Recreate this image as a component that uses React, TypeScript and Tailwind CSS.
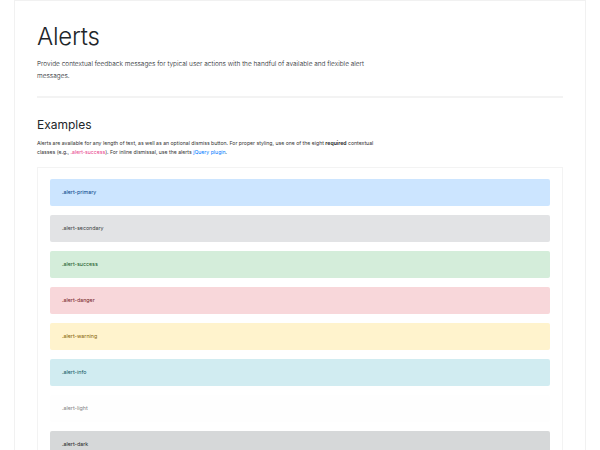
const alerts = [
    { name: "primary", cls: "bg-[#cce5ff] text-[#004085]" },
    { name: "secondary", cls: "bg-[#e2e3e5] text-[#383d41]" },
    { name: "success", cls: "bg-[#d4edda] text-[#155724]" },
    { name: "danger", cls: "bg-[#f8d7da] text-[#721c24]" },
    { name: "warning", cls: "bg-[#fff3cd] text-[#856404]" },
    { name: "info", cls: "bg-[#d1ecf1] text-[#0c5460]" },
    { name: "light", cls: "bg-[#fefefe] text-[#818182]" },
    { name: "dark", cls: "bg-[#d6d8d9] text-[#1b1e21]" },
];

export default function App() {
    return (
        <div className="min-h-screen bg-white font-['Inter',sans-serif] text-[#212529]">
            <div className="mx-[14px] border-x border-t border-[#f1f1f1] px-[22px] pt-[21px]">
                <h1 className="text-[24px] font-light leading-[29px] tracking-[-0.2px]">Alerts</h1>
                <p className="mt-[7px] max-w-[345px] text-[6.5px] font-light leading-[12px]">
                    Provide contextual feedback messages for typical user actions with the handful of available and flexible alert messages.
                </p>
                <div className="mt-[14px] h-[2px] bg-[#f3f3f3]" />

                <h2 className="mt-[20px] text-[12px] leading-[14px]">Examples</h2>
                <p className="mt-[7px] max-w-[352px] text-[5.15px] leading-[9px] text-[#333]">
                    Alerts are available for any length of text, as well as an optional dismiss button. For proper styling, use one of the eight{" "}
                    <strong className="font-bold">required</strong> contextual classes (e.g.,{" "}
                    <span className="text-[#e83e8c]">.alert-success</span>). For inline dismissal, use the alerts{" "}
                    <a className="text-[#007bff]">jQuery plugin</a>.
                </p>

                <div className="mt-[10px] flex flex-col gap-[9px] border border-[#f3f3f3] px-[12px] pt-[11px] pb-[12px]">
                    {alerts.map((a) => (
                        <div
                            key={a.name}
                            className={`flex h-[27px] items-center rounded-[2px] px-[12px] text-[5.3px] ${a.cls}`}
                        >
                            .alert-{a.name}
                        </div>
                    ))}
                </div>
            </div>
        </div>
    );
}
